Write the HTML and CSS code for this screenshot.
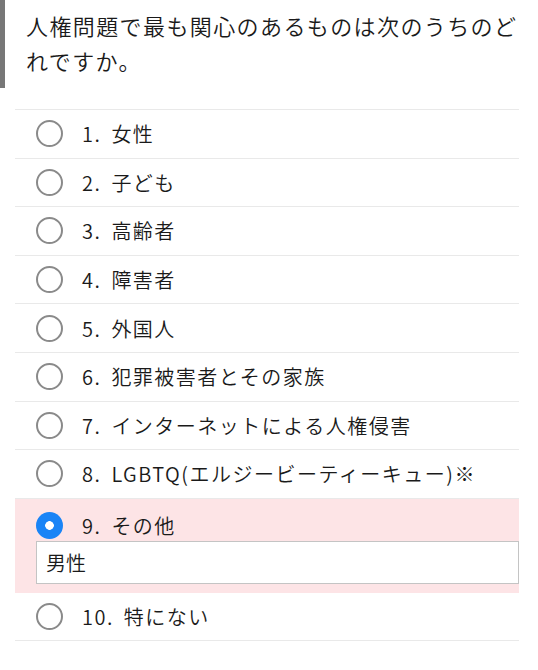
FILE: index.html
```html
<!DOCTYPE html>
<html lang="ja">
<head>
    <meta charset="UTF-8">
    <meta name="viewport" content="width=device-width, initial-scale=1.0">
    <title>アンケート</title>
    <link rel="stylesheet" href="styles.css">
</head>
<body>
    <div class="question">
        <h2 class="question-title">人権問題で最も関心のあるものは次のうちのどれですか。</h2>
    </div>

    <ul class="choices">
        <li class="choice">
            <label><input type="radio" name="q1" value="1"><span class="num">1.</span>女性</label>
        </li>
        <li class="choice">
            <label><input type="radio" name="q1" value="2"><span class="num">2.</span>子ども</label>
        </li>
        <li class="choice">
            <label><input type="radio" name="q1" value="3"><span class="num">3.</span>高齢者</label>
        </li>
        <li class="choice">
            <label><input type="radio" name="q1" value="4"><span class="num">4.</span>障害者</label>
        </li>
        <li class="choice">
            <label><input type="radio" name="q1" value="5"><span class="num">5.</span>外国人</label>
        </li>
        <li class="choice">
            <label><input type="radio" name="q1" value="6"><span class="num">6.</span>犯罪被害者とその家族</label>
        </li>
        <li class="choice">
            <label><input type="radio" name="q1" value="7"><span class="num">7.</span>インターネットによる人権侵害</label>
        </li>
        <li class="choice">
            <label><input type="radio" name="q1" value="8"><span class="num">8.</span>LGBTQ(エルジービーティーキュー)※</label>
        </li>
        <li class="choice selected">
            <label><input type="radio" name="q1" value="9" checked><span class="num">9.</span>その他</label>
            <input type="text" class="other-text" value="男性">
        </li>
        <li class="choice">
            <label><input type="radio" name="q1" value="10"><span class="num">10.</span>特にない</label>
        </li>
    </ul>
</body>
</html>
```

FILE: styles.css
```css
body {
    font-family: "Noto Sans CJK JP", "Noto Sans", sans-serif;
    font-weight: 350;
    background-color: #fff;
    color: #1a1a1a;
    margin: 0;
    padding: 0;
}
.question {
    border-left: 5px solid #777;
    padding: 8px 16px 10px 21px;
}
.question-title {
    margin: 0;
    font-size: 22px;
    font-weight: 350;
    line-height: 35px;
    letter-spacing: 1.4px;
}
.choices {
    list-style: none;
    margin: 21px 19px 0 15px;
    padding: 0;
    border-top: 1px solid #e9e9e9;
}
.choice {
    border-bottom: 1px solid #e9e9e9;
}
.choice label {
    display: flex;
    align-items: center;
    height: 47.6px;
    padding-left: 21px;
    font-size: 20px;
    letter-spacing: 1.5px;
}
.choice .num {
    margin-right: 10px;
}
.choice input[type="radio"] {
    appearance: none;
    -webkit-appearance: none;
    width: 27px;
    height: 27px;
    margin: 0 19px 0 0;
    border: 2px solid #8a8a8a;
    border-radius: 50%;
    box-sizing: border-box;
    flex-shrink: 0;
}
.choice input[type="radio"]:checked {
    border: none;
    background: radial-gradient(circle, #fff 0, #fff 4px, #1a84f6 4.6px);
}
.choice.selected {
    background-color: #fde4e6;
    border-bottom: none;
    padding-bottom: 9px;
}
.choice.selected label {
    height: 30px;
    padding-top: 12px;
}
.other-text {
    display: block;
    box-sizing: border-box;
    width: calc(100% - 21px);
    height: 43px;
    margin-left: 21px;
    padding: 0 9px;
    border: 1px solid #c4c4c4;
    background: #fff;
    font-family: inherit;
    font-weight: 350;
    font-size: 20px;
    color: #1a1a1a;
    outline: none;
}
```
